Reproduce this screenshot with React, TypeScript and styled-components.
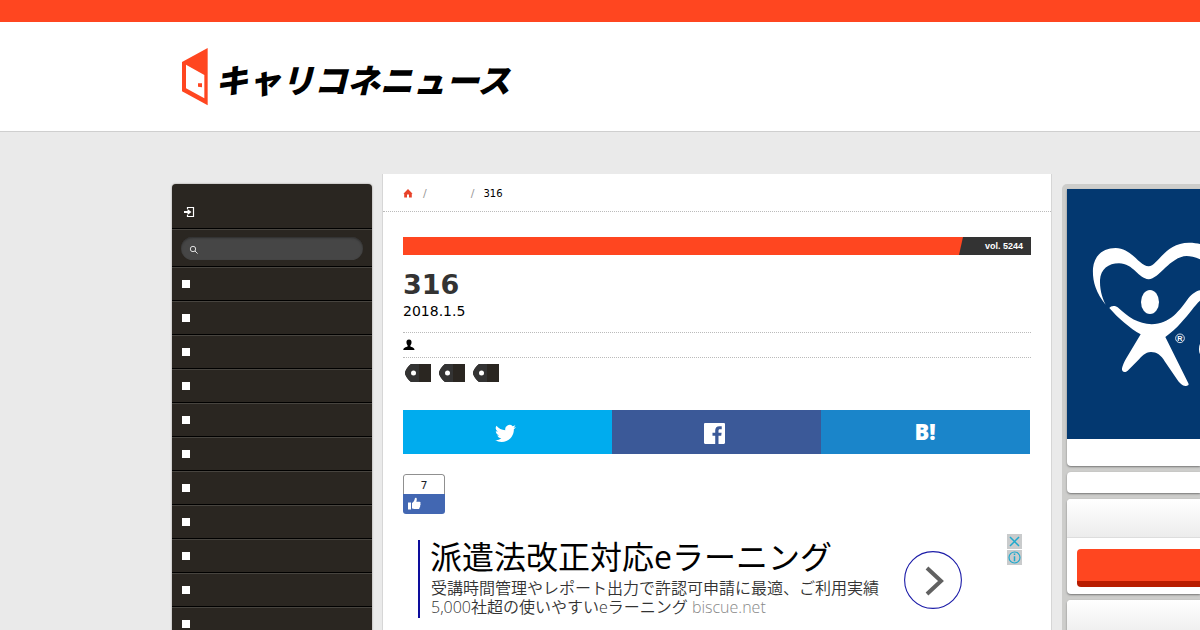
import React from "react";
import styled, { createGlobalStyle } from "styled-components";

const GlobalStyle = createGlobalStyle`
  * { box-sizing: border-box; }
  html { scrollbar-width: none; }
  body {
    margin: 0;
    background: #eaeaea;
    color: #000;
    font-family: "DejaVu Sans", "Noto Sans CJK JP", sans-serif;
    font-size: 11px;
  }
  a { color: inherit; text-decoration: none; }
  svg { display: block; }
`;

const accent = "#ff4620";
const ink = "#2a2621";

const Page = styled.div`
  min-height: 100vh;
  overflow: hidden;
`;

const TopBar = styled.div`
  height: 22px;
  background: ${accent};
`;

const Header = styled.header`
  height: 110px;
  padding: 25px 0 0 181px;
  background: #fff;
  border-bottom: 1px solid #cfcfcf;
`;

const Brand = styled.a`
  display: inline-flex;
  align-items: center;
  gap: 6px;
`;

const BrandName = styled.span`
  padding-top: 4px;
  font: italic 900 33px/48px "Noto Sans CJK JP", sans-serif;
  white-space: nowrap;
`;

const Columns = styled.div`
  display: flex;
  align-items: flex-start;
  gap: 10px;
  padding: 42px 0 0 172px;
`;

const SideNav = styled.nav`
  flex: 0 0 200px;
  margin-top: 10px;
  background: ${ink};
  border-radius: 4px 4px 0 0;
  overflow: hidden;
  box-shadow: 0 0 2px #8a8782;
`;

const LoginLink = styled.a`
  display: flex;
  height: 45px;
  padding: 22px 0 0 12px;
  border-bottom: 1px solid #000;
`;

const SearchRow = styled.form`
  height: 38px;
  padding: 7px 9px 0 9px;
  border-top: 1px solid #47443f;
  border-bottom: 1px solid #000;
`;

const SearchField = styled.label`
  display: flex;
  align-items: center;
  gap: 6px;
  height: 23px;
  padding: 2px 9px 0 8px;
  border-radius: 12px;
  background: #464646;
  box-shadow: inset 0 1px 2px #2e2e2e;
`;

const SearchInput = styled.input`
  flex: 1;
  min-width: 0;
  border: 0;
  padding: 0;
  outline: 0;
  background: transparent;
  color: #fff;
  font: inherit;
`;

const NavList = styled.ul`
  margin: 0;
  padding: 0;
  list-style: none;
`;

const NavLink = styled.a`
  display: flex;
  align-items: center;
  height: 34px;
  padding-left: 10px;
  border-top: 1px solid #47443f;
  border-bottom: 1px solid #000;
  &::before {
    content: "";
    width: 8px;
    height: 8px;
    background: #fff;
  }
`;

const Main = styled.main`
  flex: 1;
  min-width: 0;
  background: #fff;
  border: 1px solid #d6d6d6;
  border-width: 0 1px;
  padding-bottom: 40px;
`;

const Crumbs = styled.nav`
  display: flex;
  align-items: center;
  height: 38px;
  padding: 2px 20px 0;
  border-bottom: 1px dotted #bbb;
`;

const Slash = styled.span<{ $before: number }>`
  margin-left: ${(p) => p.$before}px;
  color: #999;
  font-size: 11px;
`;

const Current = styled.span`
  margin-left: 9px;
  font-size: 10px;
`;

const Article = styled.article`
  padding: 25px 20px 0;
`;

const Volume = styled.div`
  display: flex;
  justify-content: flex-end;
  height: 18px;
  background: ${accent};
`;

const VolumeTag = styled.span`
  width: 72px;
  padding-right: 8px;
  background: #333;
  clip-path: polygon(4px 0, 100% 0, 100% 100%, 0 100%);
  color: #fff;
  text-align: right;
  font: 700 9px/19px "Liberation Sans", sans-serif;
`;

const Title = styled.h1`
  margin: 14px 0 0;
  color: #333;
  font-size: 27px;
  line-height: 32px;
`;

const DateLine = styled.time`
  display: block;
  margin-bottom: 11px;
  font-size: 14px;
  line-height: 20px;
`;

const Author = styled.div`
  display: flex;
  align-items: center;
  height: 26px;
  border: 1px dotted #bbb;
  border-width: 1px 0;
`;

const Tags = styled.div`
  display: flex;
  gap: 8px;
  margin: 6px 0 28px 2px;
`;

const Share = styled.div`
  display: grid;
  grid-template-columns: repeat(3, 1fr);
  margin-right: 1px;
`;

const ShareLink = styled.a<{ $color: string }>`
  display: flex;
  align-items: center;
  justify-content: center;
  height: 44px;
  padding: 2px 5px 0 0;
  background: ${(p) => p.$color};
  color: #fff;
`;

const Hatena = styled.span`
  padding: 0 0 4px 4px;
  font: 800 22px/24px "Open Sans", sans-serif;
`;

const LikeBox = styled.div`
  width: 42px;
  margin-top: 20px;
  border-radius: 3px;
  overflow: hidden;
`;

const LikeCount = styled.div`
  height: 20px;
  border: 1px solid #909090;
  border-bottom: 0;
  border-radius: 3px 3px 0 0;
  text-align: center;
  font: 11px/21px "DejaVu Sans", sans-serif;
  color: #1d2129;
`;

const LikeButton = styled.button`
  display: flex;
  align-items: center;
  width: 100%;
  height: 20px;
  padding: 0 0 2px 5px;
  border: 0;
  background: #4267b2;
`;

const Ad = styled.section`
  display: flex;
  align-items: flex-start;
  margin: 20px 9px 0 15px;
`;

const AdText = styled.a`
  margin-top: 6px;
  height: 78px;
  padding-left: 10px;
  border-left: 2px solid #0d0d9c;
  font-family: "Open Sans", "Noto Sans CJK JP", sans-serif;
`;

const AdTitle = styled.span`
  display: block;
  height: 39px;
  font-size: 32px;
  line-height: 34px;
  font-weight: 400;
  white-space: nowrap;
`;

const AdBody = styled.span`
  display: block;
  padding-left: 1px;
  color: #333;
  font-size: 16px;
  line-height: 19px;
  font-weight: 350;
  white-space: nowrap;
`;

const AdSite = styled.span`
  color: #888;
`;

const AdArrow = styled.a`
  margin: 17px auto 0 25px;
`;

const AdControls = styled.div`
  display: grid;
  gap: 1px;
`;

const AdControl = styled.button`
  width: 15px;
  height: 15px;
  padding: 0;
  border: 0;
  background: #c9cbcc;
`;

const Aside = styled.aside`
  flex: 0 0 138px;
  display: grid;
  gap: 6px;
  margin-top: 10px;
  padding: 5px 0 0 5px;
  overflow: hidden;
  background: #cdcdcb;
  border-radius: 5px 0 0 0;
`;

const Card = styled.div`
  min-height: 21px;
  background: #fff;
  border-radius: 4px 0 0 4px;
  box-shadow: 0 1px 2px #777;
`;

const BannerCard = styled(Card)`
  height: 277px;
  border-top-left-radius: 0;
`;

const Banner = styled.a`
  display: block;
  height: 250px;
  background: #033870;
`;

const CardHead = styled.div`
  height: 39px;
  border-bottom: 1px solid #ddd;
  border-radius: 4px 0 0 0;
  background: linear-gradient(#fff, #ececec);
`;

const CardBody = styled.div`
  padding: 11px 0 7px 10px;
`;

const CallToAction = styled.button`
  display: block;
  width: 100%;
  height: 38px;
  border: 0;
  border-bottom: 6px solid #b81c00;
  border-radius: 4px 0 0 4px;
  background: ${accent};
`;

const DoorMark = () => (
  <svg width="28" height="60" viewBox="33 33 84 180" aria-hidden="true">
    <path fill={accent} fillRule="evenodd" d="M36 78 113 36V208L36 166ZM48 86V157L103 187V117ZM84 142H96V154L84 152Z" />
  </svg>
);

const LoginIcon = () => (
  <svg width="12" height="12" viewBox="0 0 12 12" fill="none" stroke="#fff">
    <path d="M3.5 3V1.5H9.5V10.5H3.5V9" strokeWidth="1.2" />
    <path d="M0 5H3.5V3L7.5 6 3.5 9V7H0Z" fill="#fff" stroke="none" />
  </svg>
);

const SearchIcon = () => (
  <svg width="10" height="10" viewBox="0 0 10 10" fill="none" stroke="#ddd" strokeWidth="1">
    <circle cx="4" cy="4" r="2.7" />
    <path d="M6 6 8.6 8.6" />
  </svg>
);

const HomeIcon = () => (
  <svg width="10" height="9" viewBox="0 0 10 9" fill="#e8432a">
    <path d="M5 0 9.6 4.8H8.8V8.5H6V5.5H4V8.5H1.2V4.8H.4Z" />
  </svg>
);

const PersonIcon = () => (
  <svg width="12" height="12" viewBox="0 0 12 12">
    <path d="M6 0.5C8 .5 8.8 2 8.5 4 8.3 5.5 7.3 6 7.3 7 7.3 8.2 11.5 8 11.5 11H.3C.3 8 4.7 8.2 4.7 7 4.7 6 3.7 5.5 3.5 4 3.2 2 4 .5 6 .5Z" />
  </svg>
);

const TagIcon = () => (
  <svg width="26" height="18" viewBox="0 0 26 18">
    <path d="M0 9C0 7 3 2 6 0H26V18H6C3 16 0 11 0 9Z" fill={ink} />
    <path d="M0 9C0 7 3 2 6 0H14V18H6C3 16 0 11 0 9Z" fill="#333" />
    <circle cx="8.5" cy="9" r="2.5" fill="#fff" />
  </svg>
);

const TwitterIcon = () => (
  <svg width="21" height="21" viewBox="0 0 24 24" fill="#fff">
    <path d="M23.95 4.57a10 10 0 0 1-2.82.77 4.96 4.96 0 0 0 2.16-2.72c-.95.55-2 .95-3.13 1.18a4.92 4.92 0 0 0-8.38 4.48C7.69 8.09 4.07 6.13 1.64 3.16a4.92 4.92 0 0 0 1.52 6.57 4.9 4.9 0 0 1-2.23-.61v.06a4.92 4.92 0 0 0 3.95 4.83 5 5 0 0 1-2.21.08 4.94 4.94 0 0 0 4.6 3.42A9.87 9.87 0 0 1 0 19.54a14 14 0 0 0 7.55 2.21c9.05 0 14-7.5 14-13.98 0-.21 0-.42-.02-.63a9.94 9.94 0 0 0 2.46-2.55Z" />
  </svg>
);

const FacebookIcon = () => (
  <svg width="21" height="21" viewBox="0 0 24 24" fill="#fff">
    <path d="M22.68 0H1.32C.59 0 0 .59 0 1.32v21.36C0 23.4.59 24 1.32 24h11.5v-9.29H9.69v-3.63h3.13V8.41c0-3.1 1.89-4.79 4.66-4.79 1.32 0 2.46.1 2.79.14v3.24h-1.92c-1.5 0-1.79.71-1.79 1.76v2.31h3.58l-.46 3.63h-3.12V24h6.12c.73 0 1.32-.6 1.32-1.32V1.32C24 .59 23.4 0 22.68 0Z" />
  </svg>
);

const ThumbIcon = () => (
  <svg width="13" height="13" viewBox="0 0 13 13" fill="#fff">
    <path d="M0 5.5H3V12.5H0ZM4 6C5.5 5 6.5 3.5 6.8 1.5 6.9.5 8.7.3 8.8 2 8.9 3 8.5 4 8.3 4.8H11.5C12.7 4.8 12.9 6.3 12.3 6.8 12.8 7.4 12.7 8.3 12 8.7 12.4 9.4 12.1 10.2 11.5 10.5 11.7 11.4 11.2 12 10.3 12H6C5 12 4.5 11.5 4 11.3Z" />
  </svg>
);

const BannerArt = () => (
  <svg width="100%" height="250" viewBox="36 -123 399 750" preserveAspectRatio="xMinYMin slice" fill="#fff">
    <path d="M152 224C120 185 112 150 114 115 118 75 145 54 182 54 230 54 252 108 281 109 308 108 330 38 402 38 415 38 428 40 435 42V88C420 80 405 78 395 78 345 80 312 147 281 148 250 146 235 100 192 100 160 100 137 118 135 150 134 185 145 210 152 224Z" />
    <path d="M163 234C168 226 180 226 188 232 220 262 250 282 290 283 345 283 375 240 400 205 412 190 425 183 435 181V212C420 225 400 255 380 276 365 295 345 310 331 321L400 460C403 466 398 468 391 468 382 468 375 460 370 454L330 395C318 375 305 366 288 366 270 366 260 380 250 390L218 422C210 430 199 426 201 415 203 405 208 395 213 386L257 313C225 295 190 265 163 234Z" />
    <ellipse cx="285" cy="216" rx="27" ry="36" />
    <circle cx="375" cy="325" r="13" fill="none" stroke="#fff" strokeWidth="2.5" />
    <text x="375" y="333" textAnchor="middle" fontFamily="Liberation Sans" fontWeight="700" fontSize="22">R</text>
    <ellipse cx="446" cy="357" rx="14" ry="26" />
  </svg>
);

const navItems = Array.from({ length: 11 }, (_, i) => `カテゴリー ${i + 1}`);

export default function App() {
  return (
    <Page>
      <GlobalStyle />
      <TopBar />
      <Header>
        <Brand href="#">
          <DoorMark />
          <BrandName>キャリコネニュース</BrandName>
        </Brand>
      </Header>
      <Columns>
        <SideNav>
          <LoginLink href="#" aria-label="ログイン"><LoginIcon /></LoginLink>
          <SearchRow>
            <SearchField>
              <SearchIcon />
              <SearchInput type="text" aria-label="検索" />
            </SearchField>
          </SearchRow>
          <NavList>
            {navItems.map((name) => (
              <li key={name}><NavLink href="#" aria-label={name} /></li>
            ))}
          </NavList>
        </SideNav>
        <Main>
          <Crumbs>
            <a href="#" aria-label="ホーム"><HomeIcon /></a>
            <Slash $before={10}>/</Slash>
            <Slash $before={44}>/</Slash>
            <Current>316</Current>
          </Crumbs>
          <Article>
            <Volume><VolumeTag>vol. 5244</VolumeTag></Volume>
            <Title>316</Title>
            <DateLine>2018.1.5</DateLine>
            <Author><PersonIcon /></Author>
            <Tags>
              {["1", "2", "3"].map((n) => (
                <a key={n} href="#" aria-label={`タグ ${n}`}><TagIcon /></a>
              ))}
            </Tags>
            <Share>
              <ShareLink href="#" $color="#00acee" aria-label="Twitter"><TwitterIcon /></ShareLink>
              <ShareLink href="#" $color="#3b5998" aria-label="Facebook"><FacebookIcon /></ShareLink>
              <ShareLink href="#" $color="#1a85ca"><Hatena>B!</Hatena></ShareLink>
            </Share>
            <LikeBox>
              <LikeCount>7</LikeCount>
              <LikeButton aria-label="いいね"><ThumbIcon /></LikeButton>
            </LikeBox>
            <Ad>
              <AdText href="#">
                <AdTitle>派遣法改正対応eラーニング</AdTitle>
                <AdBody>受講時間管理やレポート出力で許認可申請に最適、ご利用実績</AdBody>
                <AdBody>5,000社超の使いやすいeラーニング <AdSite>biscue.net</AdSite></AdBody>
              </AdText>
              <AdArrow href="#" aria-label="開く">
                <svg width="58" height="58" viewBox="0 0 58 58" fill="none">
                  <circle cx="29" cy="29" r="28.4" stroke="#1c1ca8" strokeWidth="1.1" />
                  <path d="M23 17 37 30 23 43" stroke="#616161" strokeWidth="4" />
                </svg>
              </AdArrow>
              <AdControls>
                <AdControl aria-label="閉じる">
                  <svg width="15" height="15" viewBox="0 0 15 15" stroke="#1fa9cd" strokeWidth="1.5">
                    <path d="M3 3 12 12M12 3 3 12" />
                  </svg>
                </AdControl>
                <AdControl aria-label="広告情報">
                  <svg width="15" height="15" viewBox="0 0 15 15" fill="none" stroke="#1fa9cd">
                    <circle cx="7.5" cy="7.5" r="5.5" strokeWidth="1.2" />
                    <path d="M7.5 3.5V5M7.5 6.2V11.2" strokeWidth="1.5" />
                  </svg>
                </AdControl>
              </AdControls>
            </Ad>
          </Article>
        </Main>
        <Aside>
          <BannerCard><Banner href="#" aria-label="バナー"><BannerArt /></Banner></BannerCard>
          <Card />
          <Card>
            <CardHead />
            <CardBody><CallToAction aria-label="登録" /></CardBody>
          </Card>
          <Card><CardHead /></Card>
        </Aside>
      </Columns>
    </Page>
  );
}
